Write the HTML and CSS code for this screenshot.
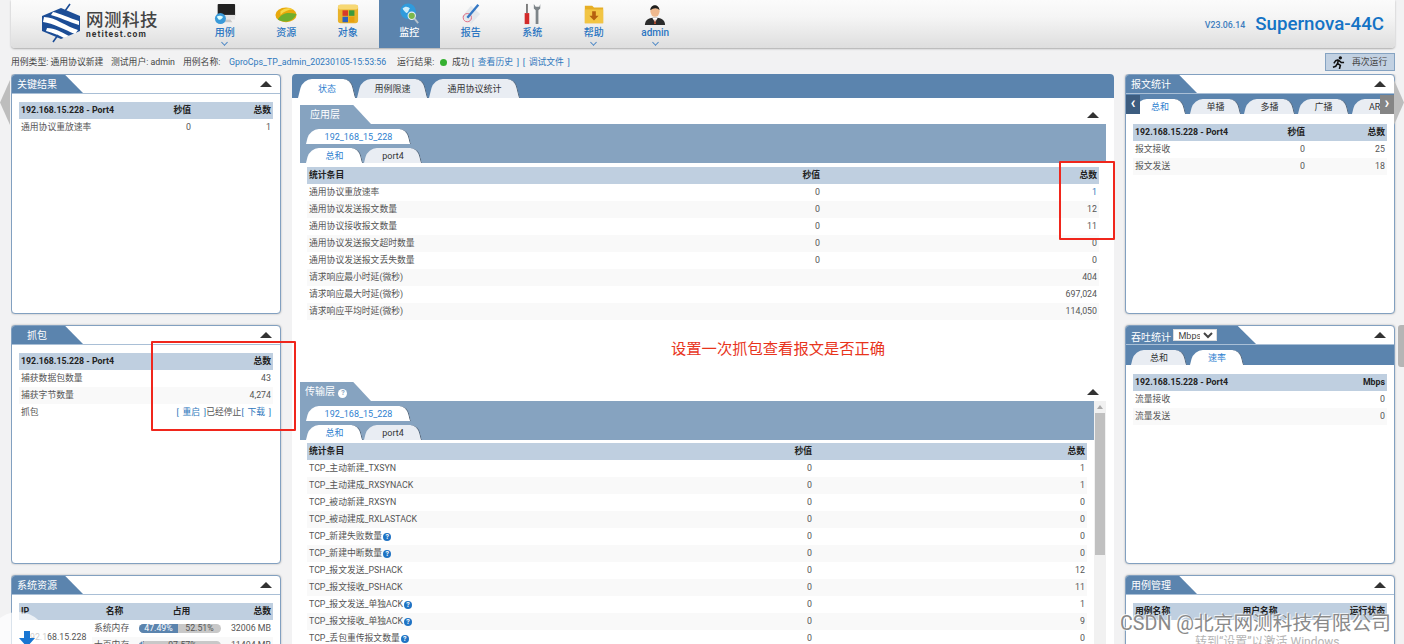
FILE: index.html
```html
<!DOCTYPE html>
<html lang="zh">
<head>
<meta charset="utf-8">
<title>Supernova-44C</title>
<link rel="stylesheet" href="styles.css">
</head>
<body>
<header class="top">
  <div class="logo">
    <svg class="logo-mark" viewBox="0 0 44 40" width="44" height="40">
      <path d="M22 5 L41 13 V28 L22 36 L3 28 V13 Z" fill="#1c4d96"/>
      <path d="M5 14 C16 14 28 24 39 27 L36 31 C26 27 14 20 4 19 Z M8 25 C16 25 22 29 30 33 L25 35 C20 32 14 30 7 28 Z M14 9 C20 10 30 15 40 18 V22 C30 19 20 14 12 12 Z" fill="#fff"/>
      <path d="M31 1 L26 8 M14 39 L19 32" stroke="#1c4d96" stroke-width="1.6"/>
    </svg>
    <div class="logo-text"><div class="logo-cn">网测科技</div><div class="logo-en">netitest.com</div></div>
  </div>
  <nav class="nav">
    <a class="nav-item"><svg viewBox="0 0 24 24" width="24" height="24"><rect x="4" y="1" width="19" height="14" rx="1" fill="#222"/><rect x="4" y="13" width="19" height="5" fill="#e4e4e4"/><path d="M9 18h9l2 3H9z" fill="#c9c9c9"/><circle cx="7" cy="17" r="6" fill="#3a9ad9"/><path d="M3 15c2-2 5-1 7 0-1 2-3 4-5 3z" fill="#dff"/></svg><span>用例</span><i class="chev"></i></a>
    <a class="nav-item"><svg viewBox="0 0 24 24" width="24" height="24"><ellipse cx="12" cy="13" rx="11.500" ry="8" fill="#e8a90c"/><path d="M3 18C8 10 15 10 23.500 12 21 19 12 23 3 18Z" fill="#6fae2d"/><path d="M6 9c4-4 10-4 14-2-6 0-10 2-14 6z" fill="#f8d748"/></svg><span>资源</span></a>
    <a class="nav-item"><svg viewBox="0 0 24 24" width="24" height="24"><rect x="1" y="2" width="22" height="20" rx="3" fill="#e9b22a"/><rect x="1" y="2" width="22" height="5" rx="2" fill="#f7d873"/><rect x="6" y="8" width="6" height="6" fill="#d83a2a"/><rect x="13" y="8" width="6" height="6" fill="#3c9a3c"/><rect x="6" y="15" width="6" height="6" fill="#2c62c0"/><rect x="13" y="15" width="6" height="6" fill="#e8a010"/></svg><span>对象</span></a>
    <a class="nav-item active"><svg viewBox="0 0 24 24" width="24" height="24"><circle cx="11" cy="9" r="8.500" fill="#2f9bdc"/><path d="M5 6c3-3 6-2 8 0-2 2-1 4-4 5-2-2-3-3-4-5z" fill="#cdeefb"/><circle cx="15" cy="14" r="4" fill="#7cb84a" stroke="#e8eef4" stroke-width="1.200"/><path d="M18 17l4 5" stroke="#b9c3cc" stroke-width="2"/></svg><span>监控</span></a>
    <a class="nav-item"><svg viewBox="0 0 24 24" width="24" height="24"><path d="M2 15 L12 3 22 12 12 23Z" fill="#e4e8ec"/><circle cx="8" cy="16" r="4.500" fill="none" stroke="#e0607a"/><path d="M8 16 L20 2" stroke="#3578c4" stroke-width="2.600"/></svg><span>报告</span></a>
    <a class="nav-item"><svg viewBox="0 0 24 24" width="24" height="24"><rect x="4" y="11" width="5" height="12" fill="#d32a2a"/><rect x="5.500" y="1" width="2" height="10" fill="#777"/><path d="M14 1v5l2 2v15h3V8l2-2V1l-1 3h-4z" fill="#7d8488"/></svg><span>系统</span></a>
    <a class="nav-item"><svg viewBox="0 0 24 24" width="24" height="24"><path d="M2 3h8l2 2h10v17H2z" fill="#e6ae25"/><rect x="2" y="7" width="20" height="15" fill="#f2c544"/><path d="M10 9h4v5h3l-5 5-5-5h3z" fill="#b5600f"/></svg><span>帮助</span><i class="chev"></i></a>
    <a class="nav-item"><svg viewBox="0 0 24 24" width="24" height="24"><path d="M1 24c0-6 5-8 11-8s11 2 11 8z" fill="#2b2b2b"/><path d="M9 16l3 5 3-5z" fill="#fff"/><path d="M12 17l-1 6h2z" fill="#c9502a"/><ellipse cx="12" cy="9" rx="5" ry="6" fill="#eeb98f"/><path d="M7 8c-1-6 9-9 10 0-2-3-7-3-10 0z" fill="#1e1e1e"/></svg><span>admin</span><i class="chev"></i></a>
  </nav>
  <div class="brand"><span class="version">V23.06.14</span><span class="product">Supernova-44C</span></div>
</header>

<div class="subbar">
  <span class="info w100">用例类型: 通用协议新建</span>
  <span class="info w72">测试用户: admin</span>
  <span class="info w46">用例名称:</span>
  <a class="link w168">GproCps_TP_admin_20230105-15:53:56</a>
  <span class="info w43">运行结果:</span>
  <i class="dot"></i>
  <span class="info">成功 <a class="link">[ 查看历史 ] [ 调试文件 ]</a></span>
  <button class="rerun"><svg viewBox="0 0 14 14" width="13" height="13"><circle cx="9" cy="2" r="1.800" fill="#111"/><path d="M7 4 L4 5 2 8M7 4 L6 8 9 10 8 14M6 8 L4 11 1 12M7 4.500 L10 7 13 7" stroke="#111" stroke-width="1.700" fill="none"/></svg><span>再次运行</span></button>
</div>

<main class="layout">
  <section class="column">
    <div class="panel h240">
      <div class="phead"><div class="ptitle">关键结果</div><i class="collapse"></i></div>
      <div class="pbody">
        <table class="tbl col3">
          <tr class="th"><td>192.168.15.228 - Port4</td><td class="r">秒值</td><td class="r">总数</td></tr>
          <tr><td>通用协议重放速率</td><td class="r">0</td><td class="r">1</td></tr>
        </table>
      </div>
    </div>
    <div class="panel h239">
      <div class="phead"><div class="ptitle pad">抓包</div><i class="collapse"></i></div>
      <div class="pbody">
        <table class="tbl">
          <tr class="th"><td>192.168.15.228 - Port4</td><td class="r">总数</td></tr>
          <tr><td>捕获数据包数量</td><td class="r">43</td></tr>
          <tr><td>捕获字节数量</td><td class="r">4,274</td></tr>
          <tr><td>抓包</td><td class="r"><a class="link">[ 重启 ]</a>已经停止<a class="link">[ 下载 ]</a></td></tr>
        </table>
      </div>
    </div>
    <div class="panel grow">
      <div class="phead"><div class="ptitle">系统资源</div><i class="collapse"></i></div>
      <div class="pbody">
        <table class="tbl sys">
          <tr class="th"><td>IP</td><td class="c">名称</td><td class="c">占用</td><td class="r">总数</td></tr>
          <tr class="plain"><td rowspan="2" class="ip">192.168.15.228</td><td>系统内存</td><td><div class="bar"><b class="used u47">47.49%</b><span class="rest">52.51%</span></div></td><td class="r">32006 MB</td></tr>
          <tr class="alt"><td>大页内存</td><td><div class="bar"><b class="used u2">2.43%</b><span class="rest">97.57%</span></div></td><td class="r">11404 MB</td></tr>
        </table>
      </div>
    </div>
  </section>

  <section class="center">
    <div class="ctabs">
      <a class="tab on w58">状态</a><a class="tab w71">用例限速</a><a class="tab w91">通用协议统计</a>
    </div>
    <div class="inner h277">
      <div class="phead flat"><div class="ptitle light">应用层</div><i class="collapse"></i></div>
      <div class="ibar">
        <div class="irow"><a class="tab sm on w105">192_168_15_228</a></div>
        <div class="irow"><a class="tab sm on w57">总和</a><a class="tab sm w58">port4</a></div>
      </div>
      <table class="tbl app">
        <tr class="th"><td>统计条目</td><td class="r">秒值</td><td class="r">总数</td></tr>
        <tr><td>通用协议重放速率</td><td class="r">0</td><td class="r"><a class="link">1</a></td></tr>
        <tr><td>通用协议发送报文数量</td><td class="r">0</td><td class="r">12</td></tr>
        <tr><td>通用协议接收报文数量</td><td class="r">0</td><td class="r">11</td></tr>
        <tr><td>通用协议发送报文超时数量</td><td class="r">0</td><td class="r">0</td></tr>
        <tr><td>通用协议发送报文丢失数量</td><td class="r">0</td><td class="r">0</td></tr>
        <tr><td>请求响应最小时延(微秒)</td><td></td><td class="r">404</td></tr>
        <tr><td>请求响应最大时延(微秒)</td><td></td><td class="r">697,024</td></tr>
        <tr><td>请求响应平均时延(微秒)</td><td></td><td class="r">114,050</td></tr>
      </table>
    </div>
    <div class="inner">
      <div class="phead flat"><div class="ptitle light tight">传输层 <i class="help white">?</i></div><i class="collapse"></i></div>
      <div class="split">
        <div class="smain">
          <div class="ibar">
            <div class="irow"><a class="tab sm on w105">192_168_15_228</a></div>
            <div class="irow"><a class="tab sm on w57">总和</a><a class="tab sm w58">port4</a></div>
          </div>
          <table class="tbl tcp">
            <tr class="th"><td>统计条目</td><td class="r">秒值</td><td class="r">总数</td></tr>
            <tr><td>TCP_主动新建_TXSYN</td><td class="r">0</td><td class="r">1</td></tr>
            <tr><td>TCP_主动建成_RXSYNACK</td><td class="r">0</td><td class="r">1</td></tr>
            <tr><td>TCP_被动新建_RXSYN</td><td class="r">0</td><td class="r">0</td></tr>
            <tr><td>TCP_被动建成_RXLASTACK</td><td class="r">0</td><td class="r">0</td></tr>
            <tr><td>TCP_新建失败数量<i class="help">?</i></td><td class="r">0</td><td class="r">0</td></tr>
            <tr><td>TCP_新建中断数量<i class="help">?</i></td><td class="r">0</td><td class="r">0</td></tr>
            <tr><td>TCP_报文发送_PSHACK</td><td class="r">0</td><td class="r">12</td></tr>
            <tr><td>TCP_报文接收_PSHACK</td><td class="r">0</td><td class="r">11</td></tr>
            <tr><td>TCP_报文发送_单独ACK<i class="help">?</i></td><td class="r">0</td><td class="r">1</td></tr>
            <tr><td>TCP_报文接收_单独ACK<i class="help">?</i></td><td class="r">0</td><td class="r">9</td></tr>
            <tr><td>TCP_丢包重传报文数量<i class="help">?</i></td><td class="r">0</td><td class="r">0</td></tr>
          </table>
        </div>
        <div class="scroll"><i class="sup"></i><div class="thumb"></div></div>
      </div>
    </div>
  </section>

  <section class="column">
    <div class="panel h240">
      <div class="phead"><div class="ptitle">报文统计</div><i class="collapse"></i></div>
      <div class="rbar">
        <i class="pager dark">‹</i>
        <a class="tab sm on w52 first">总和</a><a class="tab sm w51">单播</a><a class="tab sm w51">多播</a><a class="tab sm w51">广播</a><a class="tab sm w51">ARP</a>
        <i class="pager gray">›</i>
      </div>
      <div class="pbody extra3">
        <table class="tbl col3">
          <tr class="th"><td>192.168.15.228 - Port4</td><td class="r">秒值</td><td class="r">总数</td></tr>
          <tr><td>报文接收</td><td class="r">0</td><td class="r">25</td></tr>
          <tr><td>报文发送</td><td class="r">0</td><td class="r">18</td></tr>
        </table>
      </div>
    </div>
    <div class="panel h239">
      <div class="phead"><div class="ptitle wide">吞吐统计 <select class="unit"><option>Mbps</option></select></div><i class="collapse"></i></div>
      <div class="rbar two">
        <a class="tab sm w56">总和</a><a class="tab sm on w54">速率</a>
      </div>
      <div class="pbody extra2">
        <table class="tbl">
          <tr class="th"><td>192.168.15.228 - Port4</td><td class="r">Mbps</td></tr>
          <tr><td>流量接收</td><td class="r">0</td></tr>
          <tr><td>流量发送</td><td class="r">0</td></tr>
        </table>
      </div>
    </div>
    <div class="panel grow">
      <div class="phead"><div class="ptitle">用例管理</div><i class="collapse"></i></div>
      <div class="pbody">
        <table class="tbl mgmt">
          <tr class="th"><td>用例名称</td><td class="c">用户名称</td><td class="r">运行状态</td></tr>
        </table>
      </div>
    </div>
  </section>
</main>

<i class="side left-side"></i>
<i class="side right-side"></i>
<i class="handle"></i>
<div class="redbox box-a"></div>
<div class="redbox box-b"></div>
<div class="note">设置一次抓包查看报文是否正确</div>
<div class="fab"><svg viewBox="0 0 16 16" width="16" height="16"><path d="M5 0h6v7h5l-8 9-8-9h5z" fill="#1976d2"/></svg></div>
<div class="activate">转到“设置”以激活 Windows</div>
<div class="watermark">CSDN @北京网测科技有限公司</div>
</body>
</html>
```
FILE: styles.css
```css
* { box-sizing: border-box; }
html, body { margin: 0; height: 644px; overflow: hidden; }
body {
  position: relative;
  background: #f2f2f3;
  font: 8.8px/1.2 Roboto, "Noto Sans CJK SC", sans-serif;
  color: #555;
}
a { color: inherit; text-decoration: none; }
i { font-style: normal; }

/* header */
.top {
  height: 48px;
  margin: 0 9px 0 11px;
  display: flex;
  align-items: stretch;
  background: linear-gradient(#fbfbfb, #f5f5f5 35%, #dedede);
  border-radius: 0 0 4px 4px;
  box-shadow: 0 1px 2px #aaa;
}
.logo { width: 183px; display: flex; align-items: center; padding: 0 0 2px 28px; gap: 3px; }
.logo-mark { flex: none; }
.logo-text { margin-top: 2px; }
.logo-cn { font-size: 17.500px; line-height: 20px; color: #444; font-weight: 500; letter-spacing: .5px; white-space: nowrap; }
.logo-en { font-size: 8.500px; line-height: 9px; color: #333; font-weight: 700; letter-spacing: 1.05px; }
.nav { display: flex; }
.nav-item {
  width: 61.500px;
  display: flex;
  flex-direction: column;
  align-items: center;
  padding-top: 3px;
  color: #2b76c2;
  font-size: 10px;
  line-height: 13px;
  font-weight: 500;
}
.nav-item svg { flex: none; width: 24px; height: 22px; margin-bottom: 1px; }
.nav-item.active { background: #5b84ae; color: #fff; }
.chev {
  width: 5px; height: 5px;
  margin-top: 1px;
  border: solid #4a86c5;
  border-width: 0 1px 1px 0;
  transform: rotate(45deg) scale(.95);
}
.brand { margin-left: auto; display: flex; align-items: center; padding: 0 11px 0 0; gap: 10px; }
.version { font-size: 8.800px; font-weight: 500; color: #3d7dbe; position: relative; top: 1px; }
.product { font-size: 18.700px; font-weight: 500; color: #1473c5; }

/* sub bar */
.subbar {
  height: 26px;
  margin: 0 9px 0 11px;
  display: flex;
  align-items: center;
  white-space: nowrap;
  color: #444;
  padding-top: 2px;
}
.w100 { width: 100px; }
.w72 { width: 72px; }
.w46 { width: 46px; }
.w43 { width: 43px; }
.w168 { width: 168px; }
.link { color: #2f78bd; word-spacing: 1.500px; }
.dot { width: 7px; height: 7px; border-radius: 50%; background: #35b030; margin: 0 5px 0 0; }
.rerun {
  margin-left: auto;
  width: 70px; height: 18px;
  padding: 0 0 0 6px;
  display: flex; align-items: center; gap: 7px;
  background: #c2d1e2;
  border: 1px solid #85a3c2;
  color: #444;
  font: inherit;
}

/* layout */
.layout {
  display: grid;
  grid-template-columns: 270px 822px 270px;
  gap: 11px;
  margin-left: 11px;
  height: 570px;
  overflow: hidden;
}
.column { display: flex; flex-direction: column; gap: 11px; }
.panel {
  background: #fff;
  border: 1px solid #82a0c0;
  border-radius: 4px;
  box-shadow: 0 0 2px #aaa;
  overflow: hidden;
}
.h240 { height: 240px; flex: none; }
.h239 { height: 239px; flex: none; }
.grow { flex: 1; min-height: 100px; }
.phead {
  height: 19px;
  display: flex;
  justify-content: space-between;
  align-items: center;
  border-bottom: 1px solid #a9bfd6;
  padding-right: 8px;
}
.phead.flat { border-bottom: 0; padding-right: 7px; }
.ptitle {
  align-self: stretch;
  width: 71px;
  padding: 3px 0 0 5px;
  font-size: 10px;
  line-height: 13px;
  color: #fff;
  background: #5b84ae;
  clip-path: polygon(0 0, 75% 0, 100% 100%, 0 100%);
  white-space: nowrap;
}
.ptitle.pad { padding-left: 15px; }
.ptitle.wide { width: 130px; clip-path: polygon(0 0, 86% 0, 100% 100%, 0 100%); }
.ptitle.light { background: #86a3c0; padding-left: 10px; }
.ptitle.light.tight { padding-left: 5px; }
.collapse { width: 0; height: 0; border: solid transparent; border-width: 0 6px 6px; border-bottom-color: #333; }
.pbody { padding: 8px 7px 0; }
.pbody.extra3 { padding-top: 10px; }
.pbody.extra2 { padding-top: 9px; }

/* tables */
.tbl { width: 100%; border-collapse: collapse; table-layout: fixed; }
.tbl td { height: 17px; padding: 0 2px; white-space: nowrap; }
.tbl tr:nth-child(odd) td { background: #f9f9f9; }
.tbl .th td, .tbl tr.th:nth-child(odd) td { background: #bfcfe0; color: #222; font-weight: 700; }
.r { text-align: right; }
.c { text-align: center; }
.col3 td:nth-child(2) { width: 50px; }
.col3 td:nth-child(3) { width: 80px; }
.tbl td:nth-child(2):last-child { width: 130px; }
.app { width: 792px; margin: 4px 0 0 7px; }
.app td:nth-child(1) { width: 450px; }
.app td:nth-child(3) { width: 277px; }
.tcp { width: 780px; margin: 3px 0 0 7px; }
.tcp td:nth-child(1) { width: 442px; }
.tcp td:nth-child(3) { width: 273px; }
.sys td:nth-child(1) { width: 73px; }
.sys td:nth-child(4) { width: 47px; }
.sys td:nth-child(2) { width: 45px; }
.sys .ip { padding-left: 6px; background: #fff !important; }
.sys tr.alt td { background: #f9f9f9; }
.sys tr.plain td { background: #fff; }
.mgmt td:nth-child(1), .mgmt td:nth-child(3) { width: 85px; }
.bar { height: 9px; display: flex; border-radius: 5px; overflow: hidden; background: #c8c8c8; font-size: 8.800px; line-height: 9px; margin: 0 3px 0 0; text-align: center; }
.used { background: #5b84ae; color: #fff; font-weight: 400; }
.u47 { width: 47.490%; }
.u2 { width: 6%; overflow: hidden; }
.rest { flex: 1; color: #555; }

/* tabs */
.tab {
  --tab-bg: #e9edf3;
  position: relative;
  z-index: 0;
  display: flex; align-items: center; justify-content: center;
  height: 19px;
  flex: none;
  margin-right: 1px;
  padding-top: 2px;
  color: #333;
  font-size: 9px;
  white-space: nowrap;
}
.tab::before, .tab::after {
  content: "";
  position: absolute;
  top: 0; bottom: 0;
  width: 60%;
  background: var(--tab-bg);
  z-index: -1;
}
.tab::before { left: 0; border-radius: 9px 0 0 0; transform: skewX(-14deg); transform-origin: bottom; }
.tab::after { right: 0; border-radius: 0 8px 0 0; border-right: 1.500px solid #4d6076; transform: skewX(14deg); transform-origin: bottom; }
.tab.on { --tab-bg: #fff; color: #2f7fd0; z-index: 1; }
.tab.sm { height: 15px; padding-top: 1px; }
.w58 { width: 58px; } .w71 { width: 71px; } .w91 { width: 91px; }
.w105 { width: 105px; } .w57 { width: 57px; }
.w51 { width: 51px; } .w52 { width: 52px; } .w56 { width: 56px; } .w54 { width: 54px; }
.center { background: #fff; border-radius: 4px 4px 0 0; padding: 0; }
.ctabs { height: 24px; display: flex; align-items: flex-end; padding: 0 0 0 6px; background: #5b84ae; border-radius: 4px 4px 0 0; }
.inner { margin: 7px 8px 0; }
.inner.h277 { height: 277px; margin-bottom: -7px; }
.ibar { background: #86a3c0; padding: 5px 0 0 6px; height: 39px; display: flex; flex-direction: column; gap: 4px; }
.irow { display: flex; }
.split { display: grid; grid-template-columns: 1fr 12px; }
.smain { min-width: 0; }
.scroll { background: #f1f1f1; display: flex; flex-direction: column; align-items: center; padding-top: 4px; }
.sup { width: 0; height: 0; border: solid transparent; border-width: 0 3px 4px; border-bottom-color: #aaa; }
.thumb { width: 10px; height: 142px; margin-top: 4px; background: #c0c0c0; }
.rbar { height: 20px; display: flex; align-items: flex-end; background: #5b84ae; position: relative; padding-left: 14px; overflow: hidden; }
.rbar.two { padding-left: 5px; }
.rbar .tab { margin-right: 3px; }
.rbar .tab.first { margin-left: -6px; margin-right: 4px; }
.pager {
  position: absolute; top: 1px; width: 14px; height: 19px; z-index: 2;
  color: #fff; font-size: 16px; line-height: 16px; font-weight: 700; text-align: center;
}
.pager.dark { left: 0; background: #3d5d80; }
.pager.gray { right: 0; background: #858585; }
.help {
  display: inline-block; width: 8px; height: 8px;
  margin-left: 1px;
  border-radius: 50%;
  background: #1f73c4;
  color: #fff;
  font-size: 7px; line-height: 8px; font-weight: 700; text-align: center;
  vertical-align: 0;
}
.help.white { background: #fff; color: #86a3c0; width: 9px; height: 9px; line-height: 9px; }
.unit { width: 44px; height: 12px; padding: 0; font: 9px Roboto, sans-serif; border: 1px solid #ddd; background: #fff; color: #444; vertical-align: 2px; }

/* overlays */
.side {
  position: absolute; top: 80px; width: 10px; height: 45px;
  background: #bdbdbd;
}
.left-side { left: 0; clip-path: polygon(100% 0, 100% 100%, 0 50%); }
.right-side { right: 0; clip-path: polygon(0 0, 0 100%, 100% 50%); }
.handle { position: absolute; right: 0; top: 325px; width: 6px; height: 42px; background: #b5b5b5; border-radius: 3px 0 0 3px; }
.redbox { position: absolute; border: 2px solid #f0261c; border-radius: 1px; }
.box-a { left: 1059px; top: 161px; width: 56px; height: 79px; }
.box-b { left: 151px; top: 341px; width: 145px; height: 90px; }
.note { position: absolute; left: 671px; top: 340px; font-size: 15.300px; line-height: 19px; color: #e8341c; white-space: nowrap; }
.fab {
  position: absolute; left: -12px; top: 612px;
  width: 60px; height: 60px; border-radius: 50%;
  background: rgba(255,255,255,.7);
  padding: 19px 0 0 31px;
}
.fab svg { display: block; }
.activate { position: absolute; left: 1195px; top: 635px; font-size: 12px; line-height: 14px; color: #b5b5b5; white-space: nowrap; }
.watermark {
  position: absolute; left: 1120px; top: 612px;
  font-size: 19.700px; line-height: 24px;
  color: #8a8a8a;
  text-shadow: 1px 1px 0 #fff, -1px -1px 0 rgba(255,255,255,.7);
  white-space: nowrap;
}
```
